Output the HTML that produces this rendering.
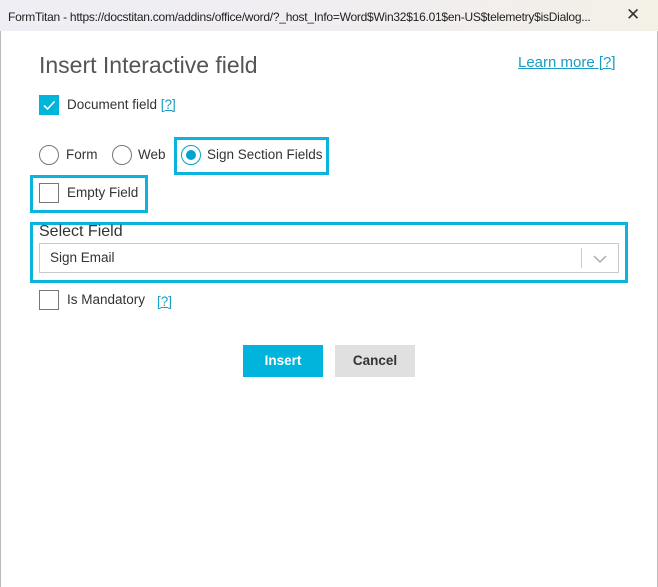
<!DOCTYPE html>
<html><head><style>
*{box-sizing:border-box;margin:0;padding:0}
body{width:658px;height:587px;background:#fff;font-family:"Liberation Sans",sans-serif;position:relative;overflow:hidden;}
.a{position:absolute}
.tb{left:0;top:0;width:658px;height:31px;background:linear-gradient(90deg,#eeeef4,#f1eef0 60%,#f3f0e6);font-size:12px;letter-spacing:-0.25px;color:#222;padding:10px 0 0 8px;white-space:nowrap}
.cb{width:20px;height:20px;border:1px solid #777;background:#fff}
.rd{width:20px;height:20px;border:1px solid #777;border-radius:50%}
.t{font-size:13.5px;color:#333;white-space:nowrap}
.hl{border:3px solid #0ab4dc}
.q{color:#1a9cc4;text-decoration:underline}
</style></head><body>
<div class="a tb">FormTitan - https://docstitan.com/addins/office/word/?_host_Info=Word$Win32$16.01$en-US$telemetry$isDialog...</div>
<div class="a" style="left:626px;top:5px;font-size:17px;color:#333">✕</div>
<div class="a" style="left:0;top:31px;width:1px;height:556px;background:#bbb"></div>
<div class="a" style="right:0;top:31px;width:1px;height:556px;background:#bbb"></div>
<div class="a" style="left:39px;top:52px;font-size:23px;color:#555">Insert Interactive field</div>
<div class="a" style="left:518px;top:54px;font-size:15px;color:#1a9cc4;text-decoration:underline">Learn more [?]</div>
<div class="a cb" style="left:39px;top:95px;background:#00b4dc;border-color:#00b4dc"><svg width="18" height="18"><path d="M4 9.5l3.5 3.5 7-7.5" stroke="#fff" stroke-width="1.6" fill="none"/></svg></div>
<div class="a t" style="left:67px;top:97px">Document field <span class="q">[?]</span></div>
<div class="a rd" style="left:39px;top:145px"></div>
<div class="a t" style="left:66px;top:147px">Form</div>
<div class="a rd" style="left:112px;top:145px"></div>
<div class="a t" style="left:138px;top:147px">Web</div>
<div class="a hl" style="left:174px;top:137px;width:155px;height:38px"></div>
<div class="a rd" style="left:181px;top:145px;border-color:#00a4cc"><div style="position:absolute;left:4px;top:4px;width:10px;height:10px;border-radius:50%;background:#00a4cc"></div></div>
<div class="a t" style="left:207px;top:147px">Sign Section Fields</div>
<div class="a hl" style="left:30px;top:175px;width:118px;height:38px"></div>
<div class="a cb" style="left:39px;top:183px"></div>
<div class="a t" style="left:67px;top:185px">Empty Field</div>
<div class="a hl" style="left:30px;top:222px;width:598px;height:61px"></div>
<div class="a" style="left:39px;top:223px;font-size:16px;color:#333">Select Field</div>
<div class="a" style="left:39px;top:243px;width:580px;height:30px;border:1px solid #c8c8c8"></div>
<div class="a t" style="left:50px;top:250px">Sign Email</div>
<div class="a" style="left:581px;top:248px;width:1px;height:20px;background:#ccc"></div>
<svg class="a" style="left:593px;top:254px" width="14" height="10"><path d="M1 2l6 6 6-6" stroke="#aaa" stroke-width="1.5" fill="none"/></svg>
<div class="a cb" style="left:39px;top:290px"></div>
<div class="a t" style="left:67px;top:292px">Is Mandatory</div>
<div class="a t q" style="left:157px;top:294px">[?]</div>
<div class="a" style="left:243px;top:345px;width:80px;height:32px;background:#00b4dc;color:#fff;font-weight:bold;font-size:13.5px;text-align:center;line-height:32px">Insert</div>
<div class="a" style="left:335px;top:345px;width:80px;height:32px;background:#e0e0e0;color:#333;font-weight:bold;font-size:13.5px;text-align:center;line-height:32px">Cancel</div>
</body></html>
